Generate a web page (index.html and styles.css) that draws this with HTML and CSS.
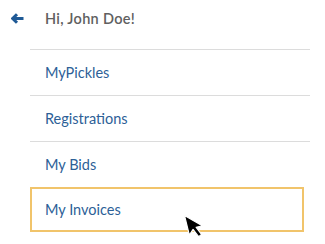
FILE: index.html
```html
<!DOCTYPE html>
<html>
<head>
<meta charset="utf-8">
<link rel="stylesheet" href="styles.css">
</head>
<body>
<div class="panel">
  <div class="header">
    <svg class="back" width="13" height="11" viewBox="0 0 13 11"><path d="M6 1.2 L1.7 5.5 L6 9.8 M2 5.5 H12.5" fill="none" stroke="#1f5a96" stroke-width="3" stroke-linejoin="miter"/></svg>
    <span class="greet">Hi, John Doe!</span>
  </div>
  <ul class="menu">
    <li class="item">MyPickles</li>
    <li class="item">Registrations</li>
    <li class="item">My Bids</li>
    <li class="item active">My Invoices</li>
  </ul>
  <svg class="cursor" width="24" height="28" viewBox="0 0 24 28"><g transform="translate(1.5 1.5) rotate(-14) scale(1.3)"><path d="M0 0 L0 15.5 L3.8 12 L6.6 18.4 L9.2 17.3 L6.5 11 L11.4 11 Z" fill="#000" stroke="#fff" stroke-width="0.9" stroke-linejoin="round"/></g></svg>
</div>
</body>
</html>
```
FILE: styles.css
```css
html, body { margin: 0; padding: 0; background: #fff; }
body { font-family: Lato, "Open Sans", sans-serif; }
.panel { position: relative; width: 325px; height: 244px; overflow: hidden; }
.header { display: flex; align-items: center; height: 37px; padding-left: 11px; }
.back { display: block; }
.greet { margin-left: 21px; font-size: 14.5px; font-weight: 600; letter-spacing: 0.3px; color: #606060; }
.menu { list-style: none; margin: 12px 15px 0 30px; padding: 0; }
.item { border-top: 1px solid #dcdcdc; padding-left: 15px; display: flex; align-items: center; font-size: 14.5px; color: #2d5f97; box-sizing: border-box; height: 46px; }
.item.active { border: 2px solid #f1c46b; margin-right: 6px; padding-left: 13px; height: 45px; }
.cursor { position: absolute; left: 183px; top: 214px; }
```
